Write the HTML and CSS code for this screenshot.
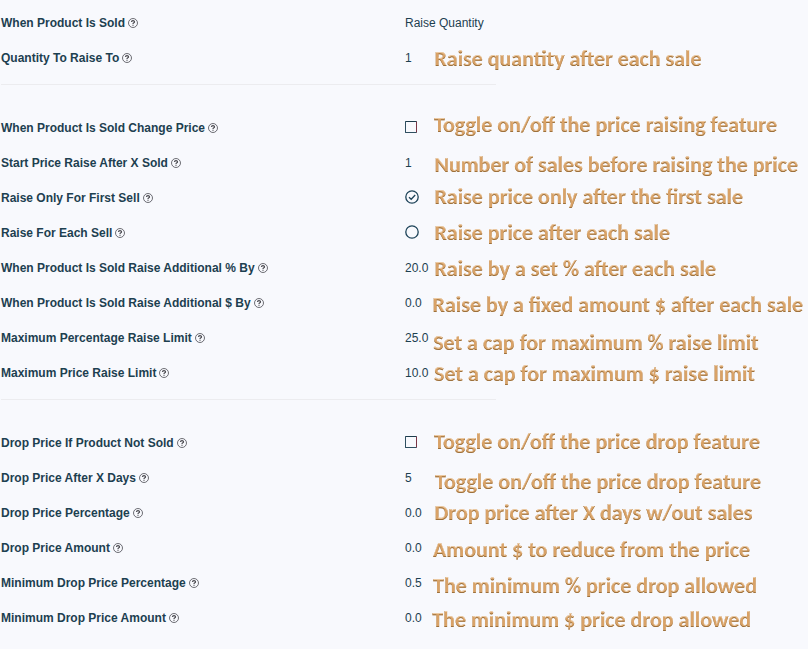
FILE: index.html
```
<!DOCTYPE html>
<html lang="en">
<head>
<meta charset="utf-8">
<title>Price settings</title>
<link rel="stylesheet" href="styles.css">
</head>
<body>
<svg class="defs" width="0" height="0">
  <filter id="bevel" x="-2%" y="-20%" width="104%" height="140%" color-interpolation-filters="sRGB">
    <feOffset in="SourceAlpha" dy="-1" result="up"/>
    <feFlood flood-color="#8c6432" flood-opacity=".8"/>
    <feComposite operator="in" in2="SourceAlpha"/>
    <feComposite operator="out" in2="up" result="lower"/>
    <feOffset in="SourceAlpha" dy="1" result="down"/>
    <feFlood flood-color="#f1d9bb" flood-opacity=".7"/>
    <feComposite operator="in" in2="SourceAlpha"/>
    <feComposite operator="out" in2="down" result="upper"/>
    <feMerge><feMergeNode in="SourceGraphic"/><feMergeNode in="upper"/><feMergeNode in="lower"/></feMerge>
  </filter>
  <symbol id="help" viewBox="0 0 10 10"><circle cx="5" cy="5" r="4.5" fill="none" stroke="currentColor" stroke-width=".8"/><path d="M3.5 4C3.5 2.2 6.5 2.2 6.5 3.9C6.5 4.9 5 4.8 5 6" fill="none" stroke="currentColor" stroke-width="1.2"/><path d="M4.4 6.7h1.2v1.1H4.4z" fill="currentColor"/></symbol>
</svg>
<main class="settings">
  <div class="row"><div class="label"><span>When Product Is Sold</span><svg class="help"><use href="#help"/></svg></div><div class="value">Raise Quantity</div></div>
  <div class="row"><div class="label"><span>Quantity To Raise To</span><svg class="help"><use href="#help"/></svg></div><div class="value">1</div><svg class="note"><text x="2.5" y="25.5" textLength="267" lengthAdjust="spacingAndGlyphs">Raise quantity after each sale</text></svg></div>
  <div class="divider"></div>
  <div class="row"><div class="label"><span>When Product Is Sold Change Price</span><svg class="help"><use href="#help"/></svg></div><div class="value"><i class="box"></i></div><svg class="note"><text x="2" y="21.5" textLength="343" lengthAdjust="spacingAndGlyphs">Toggle on/off the price raising feature</text></svg></div>
  <div class="row"><div class="label"><span>Start Price Raise After X Sold</span><svg class="help"><use href="#help"/></svg></div><div class="value">1</div><svg class="note"><text x="2.5" y="26.5" textLength="363.5" lengthAdjust="spacingAndGlyphs">Number of sales before raising the price</text></svg></div>
  <div class="row"><div class="label"><span>Raise Only For First Sell</span><svg class="help"><use href="#help"/></svg></div><div class="value"><svg class="radio" viewBox="0 0 14 14"><circle cx="7" cy="7" r="6.2"/><path d="M4 7.2l2.2 2.1L10.2 5"/></svg></div><svg class="note"><text x="2.5" y="23.5" textLength="308.5" lengthAdjust="spacingAndGlyphs">Raise price only after the first sale</text></svg></div>
  <div class="row"><div class="label"><span>Raise For Each Sell</span><svg class="help"><use href="#help"/></svg></div><div class="value"><svg class="radio" viewBox="0 0 14 14"><circle cx="7" cy="7" r="6.2"/></svg></div><svg class="note"><text x="2.5" y="24.5" textLength="235.5" lengthAdjust="spacingAndGlyphs">Raise price after each sale</text></svg></div>
  <div class="row"><div class="label"><span>When Product Is Sold Raise Additional % By</span><svg class="help"><use href="#help"/></svg></div><div class="value">20.0</div><svg class="note"><text x="2.5" y="25.5" textLength="281.5" lengthAdjust="spacingAndGlyphs">Raise by a set % after each sale</text></svg></div>
  <div class="row"><div class="label"><span>When Product Is Sold Raise Additional $ By</span><svg class="help"><use href="#help"/></svg></div><div class="value">0.0</div><svg class="note"><text x="0.6" y="26.5" textLength="370.5" lengthAdjust="spacingAndGlyphs">Raise by a fixed amount $ after each sale</text></svg></div>
  <div class="row"><div class="label"><span>Maximum Percentage Raise Limit</span><svg class="help"><use href="#help"/></svg></div><div class="value">25.0</div><svg class="note"><text x="1.2" y="29.5" textLength="325.5" lengthAdjust="spacingAndGlyphs">Set a cap for maximum % raise limit</text></svg></div>
  <div class="row"><div class="label"><span>Maximum Price Raise Limit</span><svg class="help"><use href="#help"/></svg></div><div class="value">10.0</div><svg class="note"><text x="2" y="25.5" textLength="321" lengthAdjust="spacingAndGlyphs">Set a cap for maximum $ raise limit</text></svg></div>
  <div class="divider"></div>
  <div class="row"><div class="label"><span>Drop Price If Product Not Sold</span><svg class="help"><use href="#help"/></svg></div><div class="value"><i class="box"></i></div><svg class="note"><text x="2" y="23.5" textLength="326" lengthAdjust="spacingAndGlyphs">Toggle on/off the price drop feature</text></svg></div>
  <div class="row"><div class="label"><span>Drop Price After X Days</span><svg class="help"><use href="#help"/></svg></div><div class="value">5</div><svg class="note"><text x="3" y="28.5" textLength="326" lengthAdjust="spacingAndGlyphs">Toggle on/off the price drop feature</text></svg></div>
  <div class="row"><div class="label"><span>Drop Price Percentage</span><svg class="help"><use href="#help"/></svg></div><div class="value">0.0</div><svg class="note"><text x="2.5" y="24.5" textLength="318" lengthAdjust="spacingAndGlyphs">Drop price after X days w/out sales</text></svg></div>
  <div class="row"><div class="label"><span>Drop Price Amount</span><svg class="help"><use href="#help"/></svg></div><div class="value">0.0</div><svg class="note"><text x="1" y="26.5" textLength="317" lengthAdjust="spacingAndGlyphs">Amount $ to reduce from the price</text></svg></div>
  <div class="row"><div class="label"><span>Minimum Drop Price Percentage</span><svg class="help"><use href="#help"/></svg></div><div class="value">0.5</div><svg class="note"><text x="1" y="27.5" textLength="324" lengthAdjust="spacingAndGlyphs">The minimum % price drop allowed</text></svg></div>
  <div class="row"><div class="label"><span>Minimum Drop Price Amount</span><svg class="help"><use href="#help"/></svg></div><div class="value">0.0</div><svg class="note"><text x="0.2" y="26.5" textLength="319" lengthAdjust="spacingAndGlyphs">The minimum $ price drop allowed</text></svg></div>
</main>
</body>
</html>
```
FILE: styles.css
```
body {
  margin: 0;
  background: #f8f9fd;
  color: #1d4050;
  font: 12px/37px "Liberation Sans", Arial, sans-serif;
}
.defs { display: block; }
.settings { padding-top: 5px; }
.row {
  display: grid;
  grid-template-columns: 404px 27px 376px;
  grid-template-rows: 35px;
  height: 35px;
  padding-left: 1px;
}
.label {
  display: flex;
  align-items: flex-start;
  gap: 3px;
  font-weight: bold;
  white-space: nowrap;
}
.help {
  width: 10px;
  height: 10px;
  color: #4a4a50;
  margin-top: 13px;
}
.value {
  display: flex;
  align-items: flex-start;
  white-space: nowrap;
}
.box {
  width: 10px;
  height: 10px;
  margin-top: 11px;
  border: 1px solid #2f4f60;
  border-right-color: #7a3545;
  border-top-color: #1d3c4c;
  border-radius: 1px;
}
.radio {
  width: 14px;
  height: 14px;
  flex: none;
  margin-top: 10px;
  fill: none;
  stroke: #1d4358;
  stroke-width: 1.3;
}
.note {
  width: 376px;
  height: 35px;
  overflow: visible;
  font: 600 21.5px Carlito, Calibri, Lato, sans-serif;
  fill: #d9a267;
}
.note text { filter: url(#bevel); }
.divider {
  width: 495px;
  height: 25px;
  margin: 9px 0 0 1px;
  border-top: 1px solid #ececef;
}
```
